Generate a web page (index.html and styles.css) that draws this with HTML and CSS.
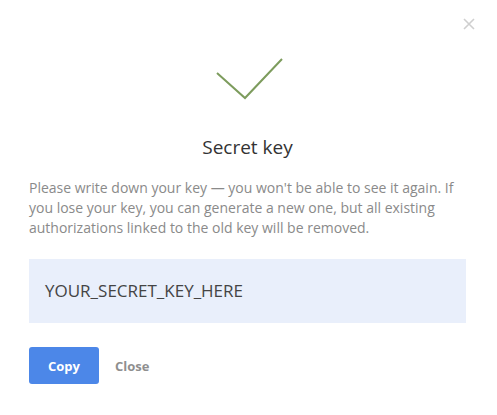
FILE: index.html
```html
<!DOCTYPE html>
<html lang="en">
<head>
    <meta charset="UTF-8">
    <meta name="viewport" content="width=device-width, initial-scale=1.0">
    <title>Secret key</title>
    <link rel="stylesheet" href="styles.css">
</head>
<body>

    <div class="modal">
        <button class="modal-close" aria-label="Close">
            <svg width="12" height="12" viewBox="0 0 12 12">
                <path d="M1 1 L11 11 M11 1 L1 11" stroke="#cfcfcf" stroke-width="1.6" fill="none"/>
            </svg>
        </button>

        <!-- success icon -->
        <div class="check">
            <svg width="70" height="46" viewBox="0 0 70 46">
                <path d="M2 17 L30 42 L67 3" stroke="#7d9c5d" stroke-width="2" fill="none"/>
            </svg>
        </div>

        <h2 class="title">Secret key</h2>

        <p class="text">Please write down your key — you won't be able to see it again. If you lose your key, you can generate a new one, but all existing authorizations linked to the old key will be removed.</p>

        <div class="key-box">YOUR_SECRET_KEY_HERE</div>

        <div class="actions">
            <button class="btn-copy">Copy</button>
            <a href="#" class="btn-close">Close</a>
        </div>
    </div>

</body>
</html>
```

FILE: styles.css
```css
body {
    margin: 0;
    background: #fff;
    font-family: "Open Sans", "Noto Sans", sans-serif;
}

.modal {
    position: relative;
    padding: 56px 31px 30px 29px;
}

.modal-close {
    position: absolute;
    top: 18px;
    right: 22px;
    padding: 0;
    border: none;
    background: none;
    cursor: pointer;
}

.check {
    display: flex;
    justify-content: center;
    padding-left: 4px;
}

.title {
    margin: 32px 0 0;
    text-align: center;
    font-size: 19px;
    font-weight: normal;
    color: #333;
}

.text {
    margin: 18px 0 0;
    font-size: 14px;
    line-height: 20px;
    color: #8a8a8a;
}

.key-box {
    margin-top: 21px;
    background-color: #e9effb;
    padding: 20px 16px;
    font-size: 17px;
    line-height: 24px;
    color: #444;
}

.actions {
    display: flex;
    align-items: center;
    gap: 16px;
    margin-top: 24px;
}

.btn-copy {
    width: 70px;
    height: 37px;
    border: none;
    border-radius: 3px;
    background-color: #4c87e8;
    color: #fff;
    font-family: inherit;
    font-size: 13px;
    font-weight: bold;
    cursor: pointer;
}

.btn-close {
    color: #8f8f8f;
    font-size: 13px;
    font-weight: bold;
    text-decoration: none;
}
```
